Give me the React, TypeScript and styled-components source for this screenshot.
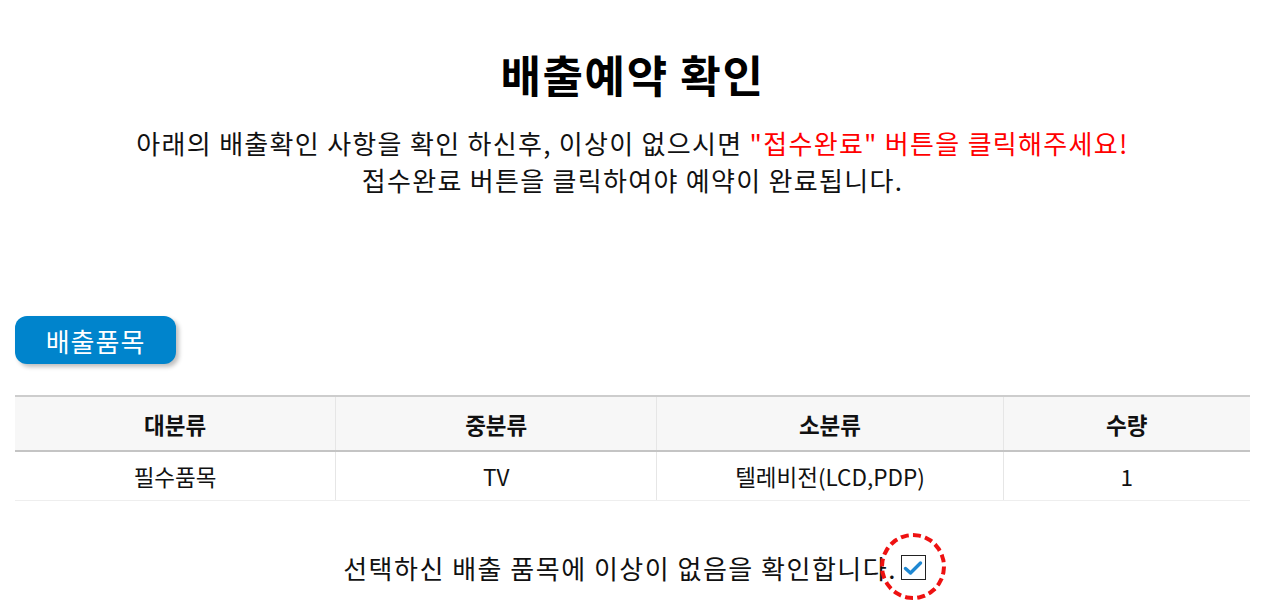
import React from "react";
import styled, { createGlobalStyle } from "styled-components";

const Global = createGlobalStyle`
  html, body { margin: 0; padding: 0; background: #fff; }
  body { font-family: "Noto Sans CJK KR", "Noto Sans", sans-serif; color: #111; }
`;

const Page = styled.div`
  padding: 0 15px 40px;
  min-height: 100vh;
  box-sizing: border-box;
  display: flex;
  flex-direction: column;
`;

const Header = styled.header`
  display: flex;
  flex-direction: column;
  align-items: center;
  padding-top: 44px;
`;

const Title = styled.h1`
  margin: 0;
  font-size: 44px;
  font-weight: 700;
  letter-spacing: 1.6px;
  line-height: 60px;
  color: #000;
`;

const Intro = styled.p`
  margin: 20px 0 0;
  font-size: 26px;
  letter-spacing: 1.3px;
  line-height: 37px;
  text-align: center;
  color: #111;
  font-weight: 400;
`;

const Red = styled.span`
  color: #ff0000;
`;

const SectionTitle = styled.div`
  margin-top: 118px;
  align-self: flex-start;
  width: 161px;
  height: 48px;
  border-radius: 12px;
  background: #0084cc;
  color: #fff;
  font-size: 26px;
  letter-spacing: 1px;
  display: flex;
  align-items: center;
  justify-content: center;
  box-shadow: 3px 3px 4px rgba(0, 0, 0, 0.25);
`;

const Table = styled.table`
  margin-top: 31px;
  width: 100%;
  border-collapse: collapse;
  font-size: 22.5px;
`;

const Th = styled.th<{ $w: number }>`
  width: ${(p) => p.$w}px;
  height: 53px;
  background: #f7f7f7;
  font-weight: 700;
  border-top: 2px solid #cdcdcd;
  border-bottom: 2px solid #c4c4c4;
  border-left: 1px solid #e6e6e6;
  padding: 0;
  &:first-child { border-left: none; }
`;

const Td = styled.td`
  height: 48px;
  text-align: center;
  border-bottom: 1px solid #eeeeee;
  border-left: 1px solid #e6e6e6;
  padding: 0;
  &:first-child { border-left: none; }
`;

const Confirm = styled.label`
  margin-top: 48px;
  margin-left: 4px;
  align-self: center;
  display: flex;
  align-items: center;
  gap: 4px;
  font-size: 26px;
  letter-spacing: 1.5px;
  line-height: 37px;
  color: #111;
  position: relative;
`;

const CheckWrap = styled.span`
  position: relative;
  display: inline-flex;
`;

const Box = styled.span`
  width: 23px;
  height: 23px;
  border: 1px solid #222;
  background: #fff;
  display: inline-flex;
  align-items: center;
  justify-content: center;
`;

const Ring = styled.span`
  position: absolute;
  left: -21px;
  top: -22px;
  width: 58px;
  height: 59px;
  border: 4px dashed #ee1111;
  border-radius: 50%;
  pointer-events: none;
`;

const cols = [321, 321, 346, 247];

export default function App() {
  return (
    <>
      <Global />
      <Page>
        <Header>
          <Title>배출예약 확인</Title>
          <Intro>
            아래의 배출확인 사항을 확인 하신후, 이상이 없으시면 <Red>"접수완료" 버튼을 클릭해주세요!</Red>
            <br />
            접수완료 버튼을 클릭하여야 예약이 완료됩니다.
          </Intro>
        </Header>
        <SectionTitle>배출품목</SectionTitle>
        <Table>
          <thead>
            <tr>
              <Th $w={cols[0]}>대분류</Th>
              <Th $w={cols[1]}>중분류</Th>
              <Th $w={cols[2]}>소분류</Th>
              <Th $w={cols[3]}>수량</Th>
            </tr>
          </thead>
          <tbody>
            <tr>
              <Td>필수품목</Td>
              <Td>TV</Td>
              <Td>텔레비전(LCD,PDP)</Td>
              <Td>1</Td>
            </tr>
          </tbody>
        </Table>
        <Confirm>
          선택하신 배출 품목에 이상이 없음을 확인합니다.
          <CheckWrap>
            <Box>
              <svg width="20" height="16" viewBox="0 0 20 16">
                <path d="M2.5 8.5 L7.5 13 L17.5 3" fill="none" stroke="#1f88d2" strokeWidth="3.4" strokeLinecap="round" strokeLinejoin="round" />
              </svg>
            </Box>
            <Ring />
          </CheckWrap>
        </Confirm>
      </Page>
    </>
  );
}
